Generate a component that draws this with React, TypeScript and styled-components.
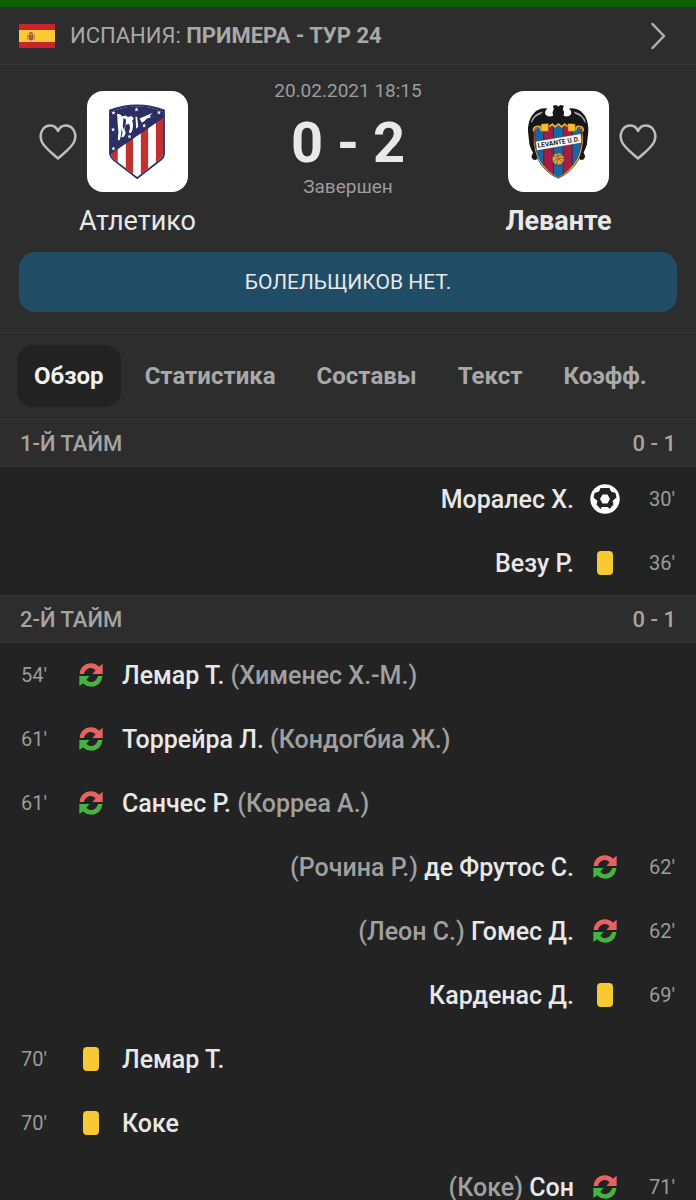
import React from "react";
import styled, { createGlobalStyle, css } from "styled-components";

const GlobalStyle = createGlobalStyle`
  * { box-sizing: border-box; }
  body { margin: 0; background: #232323; }
  button { font: inherit; border: 0; padding: 0; background: none; cursor: pointer; }
`;

const Screen = styled.div`
  display: flex;
  flex-direction: column;
  height: 100vh;
  overflow: hidden;
  background: #232323;
  color: #e8e8e8;
  font-family: Roboto, "Liberation Sans", sans-serif;
  border-top: 7px solid #0b6000;
`;

const LeagueLink = styled.a`
  display: flex;
  flex: none;
  align-items: center;
  gap: 15px;
  height: 58px;
  padding: 0 30px 0 19px;
  background: #2d2d2d;
  border-bottom: 1px solid #363636;
  color: #a8a8a8;
  font-size: 22px;
  text-decoration: none;
`;

const LeagueName = styled.span`
  flex: 1;
`;

const Match = styled.section`
  flex: none;
  height: 268px;
  padding: 14px 19px 0;
  background: #2d2d2d;
  border-bottom: 1px solid #363636;
`;

const Teams = styled.div`
  display: grid;
  grid-template-columns: 1fr 160px 1fr;
  height: 173px;
`;

const Team = styled.div<{ $away?: boolean }>`
  display: grid;
  justify-items: center;
  align-content: start;
  justify-content: ${(p) => (p.$away ? "end" : "start")};
  grid-template-columns: ${(p) => (p.$away ? "101px 38px" : "38px 101px")};
  gap: 12px 10px;
  padding: 12px 20px 0;
`;

const Favourite = styled.button`
  display: flex;
  align-self: center;
  color: #bdbdbd;
`;

const Crest = styled.div`
  width: 101px;
  height: 101px;
  border-radius: 16px;
  background: #fff;
  overflow: hidden;
`;

const TeamName = styled.div<{ $away?: boolean }>`
  grid-row: 2;
  grid-column: ${(p) => (p.$away ? 1 : 2)};
  font-size: 27px;
  line-height: 34px;
  white-space: nowrap;
  font-weight: ${(p) => (p.$away ? 700 : 400)};
`;

const Result = styled.div`
  display: flex;
  flex-direction: column;
  align-items: center;
  color: #9c9c9c;
  font-size: 19px;
  line-height: 24px;
  white-space: nowrap;
`;

const Score = styled.div`
  margin: 16px 0 8px;
  color: #e8e8e8;
  font-size: 56px;
  font-weight: 700;
  line-height: 48px;
`;

const FansButton = styled.button`
  display: block;
  width: 100%;
  height: 60px;
  border-radius: 16px;
  && {
    background: #204c66;
    color: #e8e8e8;
    font-size: 21px;
  }
`;

const Tabs = styled.nav`
  display: flex;
  flex: none;
  align-items: center;
  gap: 7px;
  height: 86px;
  padding: 0 17px;
  background: #2d2d2d;
`;

const Tab = styled.button<{ $active?: boolean }>`
  && {
    height: 62px;
    padding: 0 17px;
    border-radius: 16px;
    color: #a8a8a8;
    font-size: 24px;
    font-weight: 700;
    ${(p) =>
      p.$active &&
      css`
        background: #222;
        color: #f2f2f2;
      `}
  }
`;

const PeriodHeader = styled.h2`
  display: flex;
  justify-content: space-between;
  align-items: center;
  height: 48px;
  margin: 0;
  padding: 0 20px;
  background: #2d2d2d;
  border-top: 1px solid #363636;
  border-bottom: 1px solid #363636;
  color: #a4a4a4;
  font-size: 22px;
  font-weight: 500;
`;

const Events = styled.ul`
  margin: 0;
  padding: 0;
  list-style: none;
`;

const EventRow = styled.li<{ $away?: boolean }>`
  display: flex;
  flex-direction: ${(p) => (p.$away ? "row-reverse" : "row")};
  align-items: center;
  height: 64px;
  padding: 0 21px;
`;

const Minute = styled.span<{ $away?: boolean }>`
  width: 54px;
  color: #9c9c9c;
  font-size: 20px;
  text-align: ${(p) => (p.$away ? "right" : "left")};
`;

const IconSlot = styled.span`
  display: flex;
  justify-content: center;
  width: 32px;
`;

const Players = styled.span`
  padding: 0 15px;
  font-size: 25px;
  font-weight: 500;
  white-space: nowrap;
`;

const Replaced = styled.span`
  color: #a0a0a0;
`;

const YellowCard = styled.span`
  width: 16px;
  height: 24px;
  border-radius: 4px;
  background: #f8c932;
`;

const Flag = () => (
  <svg width="36" height="24" viewBox="0 0 36 24" aria-hidden="true">
    <rect width="36" height="24" fill="#c8252b" />
    <rect y="6" width="36" height="12" fill="#fcc938" />
    <path d="M8 10h1v6H8zM15 10h1v6h-1z" fill="#b7926b" />
    <path d="M9.500 10.500h5v3q0 3-2.500 3t-2.500-3z" fill="#b4503c" />
    <path d="M10 10l.5-2h3l.5 2z" fill="#b4683c" />
    <circle cx="12" cy="13" r="1" fill="#8d6b80" />
  </svg>
);

const Chevron = () => (
  <svg width="15" height="28" viewBox="0 0 15 28" fill="none" stroke="#b0b0b0" strokeWidth="2.500" strokeLinecap="round" strokeLinejoin="round" aria-hidden="true">
    <path d="M1.500 2 13 14 1.500 26" />
  </svg>
);

const Heart = () => (
  <svg width="38" height="36" viewBox="0 0 38 36" fill="none" stroke="currentColor" strokeWidth="2.500" strokeLinejoin="round" aria-hidden="true">
    <path d="M19 34.500C13 29 6 24 3.200 18.500 -.5 11 3 2 11 1.500c4-.2 6.500 2 8 5.500 1.500-3.500 4-5.700 8-5.500 8 .5 11.500 9.500 7.800 17C32 24 25 29 19 34.500z" />
  </svg>
);

const AtleticoCrest = () => (
  <svg width="101" height="101" viewBox="172 30 302 302" role="img" aria-label="Атлетико">
    <defs>
      <clipPath id="atletico-shield">
        <path d="M243 92Q322 60 400 92V217Q399 226 391 233L322 287 252 233Q244 226 243 217Z" />
      </clipPath>
    </defs>
    <path d="M238 86Q322 55 405 86V217Q405 229 395 237L322 294 249 237Q239 229 238 217Z" fill="#2a2f66" />
    <g clipPath="url(#atletico-shield)">
      <rect x="243" y="60" width="160" height="230" fill="#fff" />
      <path d="M243 60h21v230h-21zM288 60h22v230h-22zM333 60h22v230h-22zM378 60h24v230h-24z" fill="#c03230" />
      <path d="M238 50H405V107L238 222Z" fill="#2a2f66" />
    </g>
    <path d="M262 98l10 2 6 6 8-3 9 5 10-3 7 8-5 5 3 12-2 16-5 10-6-3 4-12-3-13-10 3-4 14 4 10-5 11-8 3 3-14-2-13-3 24-4 12-5-2 2-24-2-20z" fill="#fff" />
    <path d="M281 111l8 5-2 17-5 12-3-9z" fill="#2a2f66" />
    <path d="M317 106l5 2 3 29-6 6zM329 112l39-16-9 9 5 3-13 4-7 8-8 5-3-6z" fill="#fff" />
    <g fill="#fff">
      {[[251, 95], [320, 85], [387, 94], [250, 145], [251, 202], [299, 166], [343, 133]].map(([x, y]) => (
        <path key={`${x}-${y}`} transform={`translate(${x} ${y})`} d="M0-6 1.500-2H6L2.500 1 4 6 0 3-4 6-2.500 1-6-2h4.500z" />
      ))}
    </g>
  </svg>
);

const LevanteCrest = () => (
  <svg width="101" height="101" viewBox="54 30 302 302" role="img" aria-label="Леванте">
    <defs>
      <clipPath id="levante-shield">
        <path d="M133 145Q160 134 205 134T276 145Q280 190 262 230 240 270 204 288 167 270 146 230 128 190 133 145Z" />
      </clipPath>
    </defs>
    <path d="M188 74 198 72 204 76 211 72 221 74 218 84 222 94 220 104Q234 110 242 100 246 90 236 82 268 78 284 104 296 126 294 152L290 190 284 206 280 214 285 226 280 235 270 236 262 220H148L138 236 128 235 124 226 129 214 124 206 118 190 114 152Q112 126 125 104 141 78 172 82 162 90 166 100 174 110 189 104L187 94 191 84Z" fill="#17171a" />
    <path d="M122 126q5-29 37-35l-6 8q-18 5-27 24zM287 126q-5-29-37-35l6 8q18 5 27 24z" fill="#aaa" />
    <path d="M133 141Q165 133 204 133T276 141Q285 190 267 232 244 274 204 291 164 274 142 232 124 190 133 141Z" fill="#e5b13b" stroke="#17171a" strokeWidth="2" />
    <g clipPath="url(#levante-shield)">
      <rect x="128" y="134" width="154" height="157" fill="#a41d43" />
      <path d="M137 130h23v160h-23zM190 130h29v160h-29zM247 130h24v160h-24z" fill="#1767a2" />
      <path d="M161 130v160M190 130v160M219 130v160M246 130v160" stroke="#30203b" strokeWidth="2" />
    </g>
    <path d="M131 151q-4-15 12-15 12 0 8 12M278 151q4-15-12-15-12 0-8 12" fill="none" stroke="#e5b13b" strokeWidth="5" />
    <path d="M153 129l22-2v23l-22 1zM233 127l22 2v22l-22-1z" fill="#f6bf29" stroke="#5d4420" strokeWidth="1" />
    <path d="M177 136l10-7 7 8 11-8 10 8 8-8 9 7" fill="none" stroke="#e5b13b" strokeWidth="5" />
    <path d="M137 181 272 158 274 185 140 208z" fill="#fff" stroke="#333" strokeWidth="1" />
    <text x="205" y="190" textAnchor="middle" transform="rotate(-9 205 183)" fontFamily="Roboto, sans-serif" fontSize="20" fontWeight="700" fill="#222">LEVANTE U.D.</text>
    <circle cx="204" cy="233" r="18" fill="#dda54a" stroke="#6a4028" strokeWidth="2" />
    <path d="M188 227q18-3 30-6M190 240l14-9 13 12M202 216l2 15-5 19M207 231l14 1" fill="none" stroke="#6a4028" strokeWidth="2" />
  </svg>
);

const Ball = () => (
  <svg width="30" height="30" viewBox="0 0 30 30" role="img" aria-label="Гол">
    <circle cx="15" cy="15" r="14.700" fill="#fff" />
    <path d="M10.500 4H19.500L21 7.500 25.500 9 26.500 13.500 22.500 17 23.500 20.500 19.500 25 18 23H12L10.500 25 6.500 20.500 7.500 17 3.500 13.500 4.500 9 9 7.500Z" fill="#232323" />
    <path d="M12.500 10.500h5L20 15l-2.500 4.500h-5L10 15z" fill="#fff" />
  </svg>
);

const ARROW = "M2 33C3 14 17 1 36 1c10 0 18 4 24 10l11-9V33H40L50 22C46 18 41 15 36 15 25 15 17 23 15 33Z";

const Substitution = () => (
  <svg width="24" height="24" viewBox="0 0 72 72" role="img" aria-label="Замена">
    <path d={ARROW} fill="#e9615f" />
    <path d={ARROW} fill="#45b243" transform="rotate(180 36 36)" />
  </svg>
);

type Kind = "goal" | "card" | "sub";
type MatchEvent = { minute: number; kind: Kind; player: string; replaced?: string; away?: boolean };

const periods: { title: string; score: string; events: MatchEvent[] }[] = [
  {
    title: "1-Й ТАЙМ",
    score: "0 - 1",
    events: [
      { minute: 30, kind: "goal", player: "Моралес Х.", away: true },
      { minute: 36, kind: "card", player: "Везу Р.", away: true },
    ],
  },
  {
    title: "2-Й ТАЙМ",
    score: "0 - 1",
    events: [
      { minute: 54, kind: "sub", player: "Лемар Т.", replaced: "Хименес Х.-М." },
      { minute: 61, kind: "sub", player: "Торрейра Л.", replaced: "Кондогбиа Ж." },
      { minute: 61, kind: "sub", player: "Санчес Р.", replaced: "Корреа А." },
      { minute: 62, kind: "sub", player: "де Фрутос С.", replaced: "Рочина Р.", away: true },
      { minute: 62, kind: "sub", player: "Гомес Д.", replaced: "Леон С.", away: true },
      { minute: 69, kind: "card", player: "Карденас Д.", away: true },
      { minute: 70, kind: "card", player: "Лемар Т." },
      { minute: 70, kind: "card", player: "Коке" },
      { minute: 71, kind: "sub", player: "Сон", replaced: "Коке", away: true },
    ],
  },
];

const tabs = ["Обзор", "Статистика", "Составы", "Текст", "Коэфф."];

const EventIcon = ({ kind }: { kind: Kind }) => (
  <IconSlot>
    {kind === "goal" && <Ball />}
    {kind === "card" && <YellowCard role="img" aria-label="Жёлтая карточка" />}
    {kind === "sub" && <Substitution />}
  </IconSlot>
);

const EventItem = ({ event }: { event: MatchEvent }) => {
  const replaced = event.replaced && <Replaced>({event.replaced})</Replaced>;
  return (
    <EventRow $away={event.away}>
      <Minute $away={event.away}>{event.minute}'</Minute>
      <EventIcon kind={event.kind} />
      <Players>
        {event.away ? <>{replaced} {event.player}</> : <>{event.player} {replaced}</>}
      </Players>
    </EventRow>
  );
};

export default function App() {
  const [active, setActive] = React.useState(tabs[0]);
  return (
    <Screen>
      <GlobalStyle />
      <LeagueLink href="#league">
        <Flag />
        <LeagueName>
          ИСПАНИЯ: <b>ПРИМЕРА - ТУР 24</b>
        </LeagueName>
        <Chevron />
      </LeagueLink>
      <Match>
        <Teams>
          <Team>
            <Favourite aria-label="Добавить Атлетико в избранное"><Heart /></Favourite>
            <Crest><AtleticoCrest /></Crest>
            <TeamName>Атлетико</TeamName>
          </Team>
          <Result>
            <span>20.02.2021 18:15</span>
            <Score>0 - 2</Score>
            <span>Завершен</span>
          </Result>
          <Team $away>
            <Crest><LevanteCrest /></Crest>
            <Favourite aria-label="Добавить Леванте в избранное"><Heart /></Favourite>
            <TeamName $away>Леванте</TeamName>
          </Team>
        </Teams>
        <FansButton>БОЛЕЛЬЩИКОВ НЕТ.</FansButton>
      </Match>
      <Tabs>
        {tabs.map((tab) => (
          <Tab key={tab} $active={tab === active} onClick={() => setActive(tab)}>{tab}</Tab>
        ))}
      </Tabs>
      <main>
        {periods.map((period) => (
          <section key={period.title}>
            <PeriodHeader>
              <span>{period.title}</span>
              <span>{period.score}</span>
            </PeriodHeader>
            <Events>
              {period.events.map((event) => (
                <EventItem key={`${event.minute}-${event.player}`} event={event} />
              ))}
            </Events>
          </section>
        ))}
      </main>
    </Screen>
  );
}
